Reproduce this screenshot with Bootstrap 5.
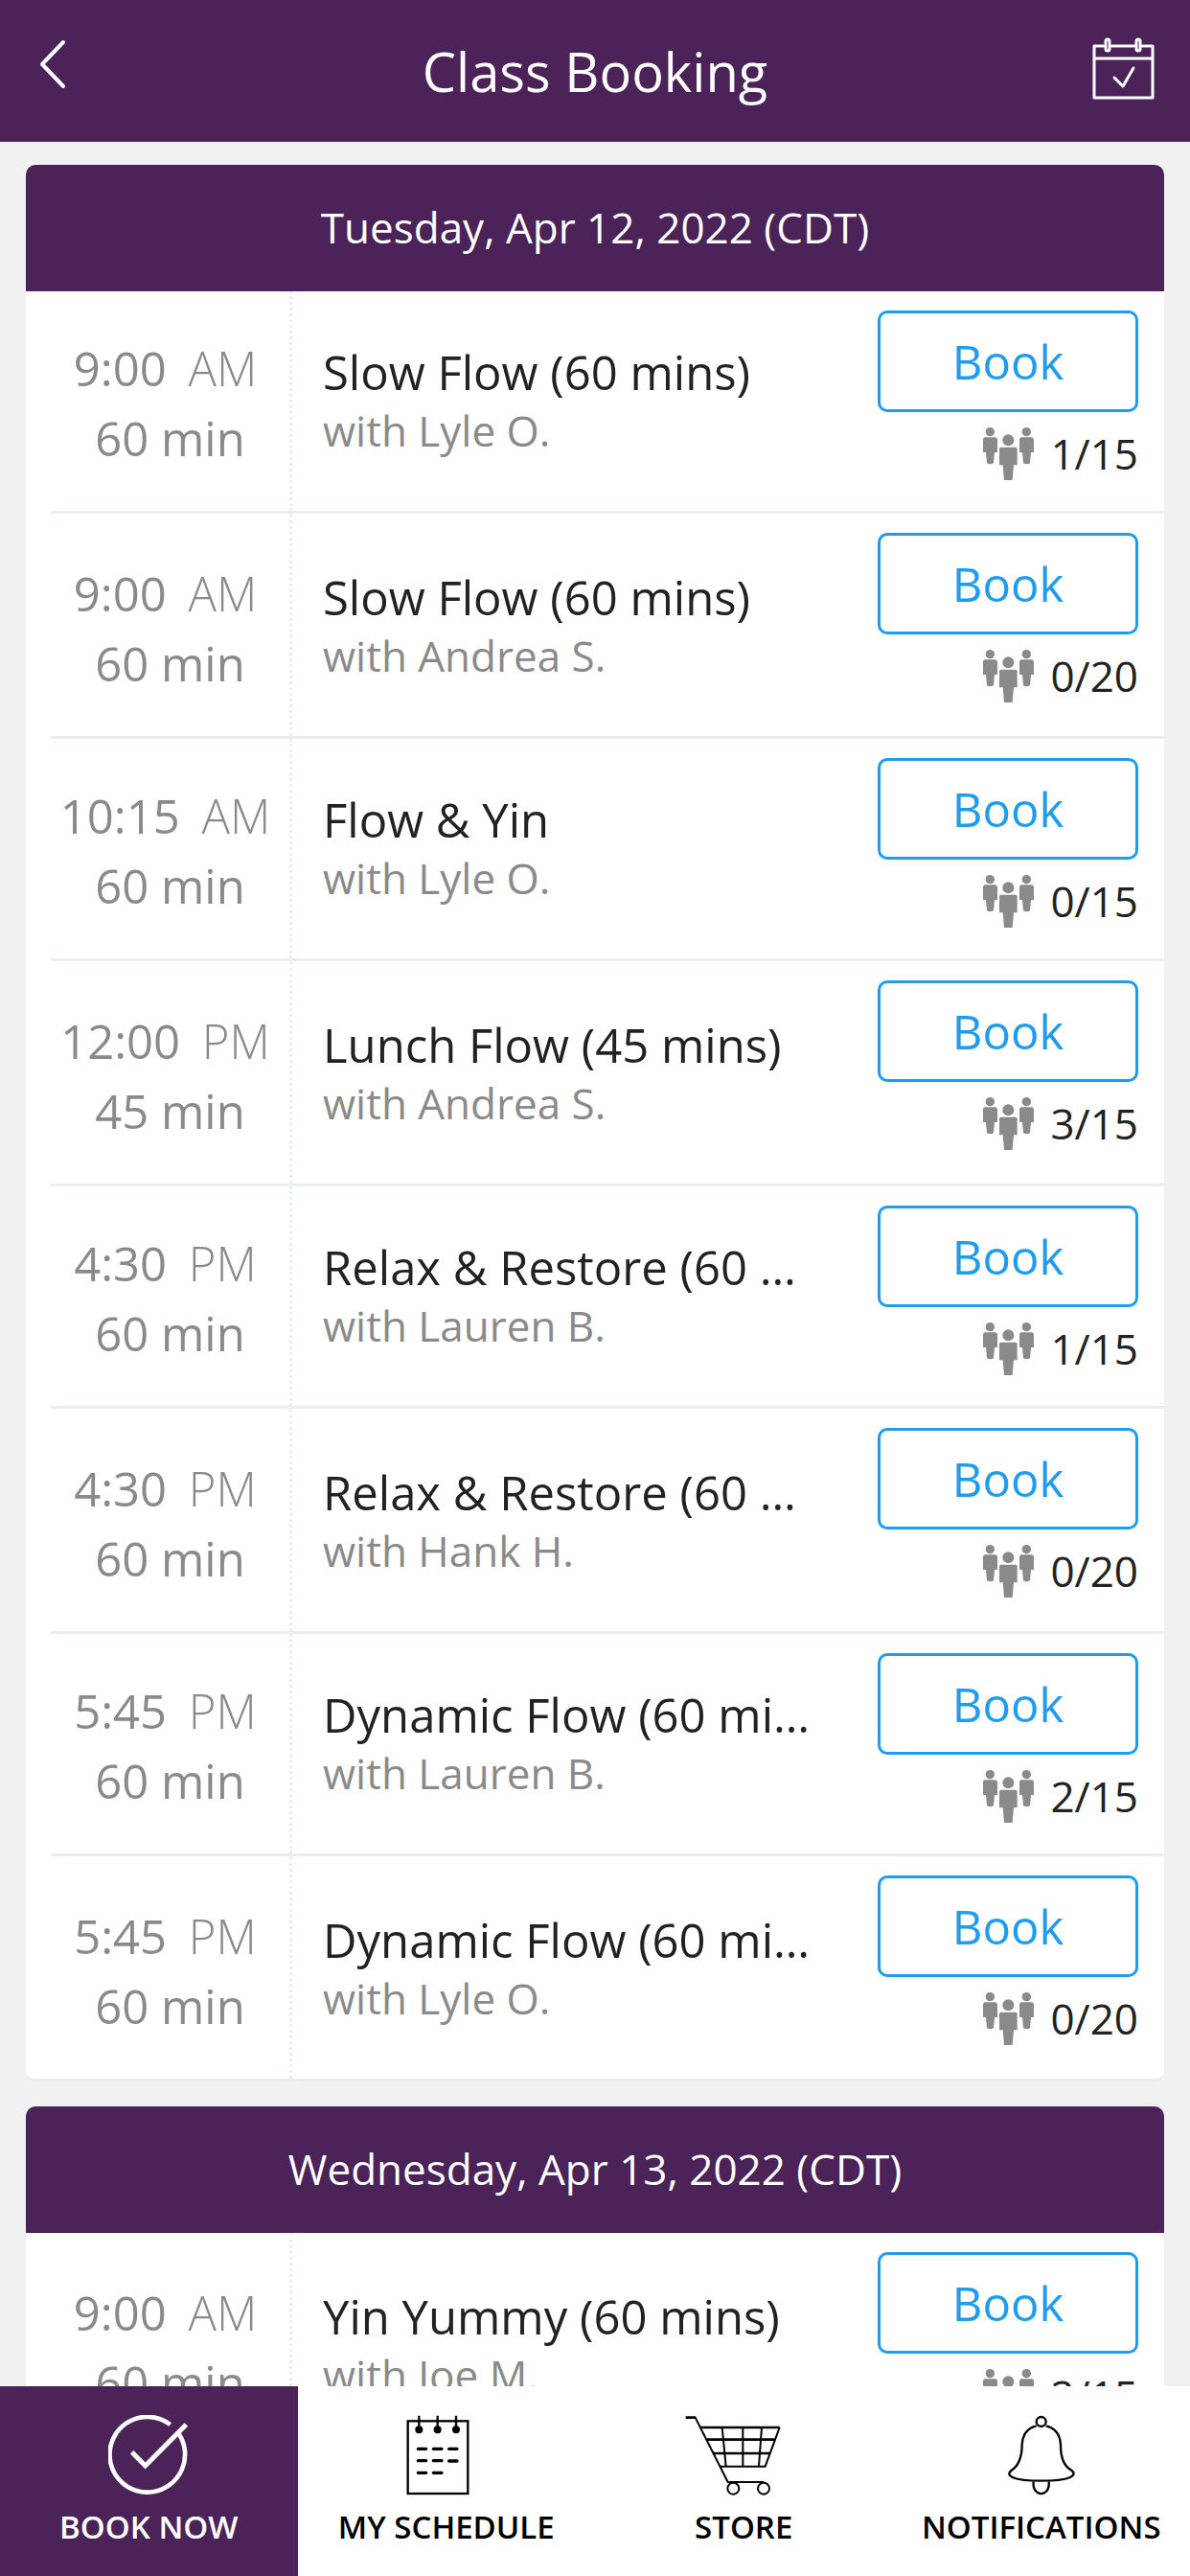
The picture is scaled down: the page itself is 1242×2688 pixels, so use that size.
<!DOCTYPE html>
<html lang="en">
<head>
<meta charset="utf-8">
<meta name="viewport" content="width=device-width, initial-scale=1">
<title>Class Booking</title>
<link href="https://cdn.jsdelivr.net/npm/bootstrap@5.3.0/dist/css/bootstrap.min.css" rel="stylesheet">
<style>
  :root { --brand: #4b2359; --action: #209cee; --rule: #e9efee; --muted: #8a8a8a; }
  body { font-family: "Open Sans", "Noto Sans", sans-serif; background: #f1f1f1; color: #222; }
  svg { display: block; flex: none; }

  .top-bar { background: var(--brand); height: 148px; padding: 0 36px; }
  .top-bar h1 { font-size: 56px; line-height: 76px; font-weight: 400; }
  .top-side { width: 70px; color: #fff; padding-bottom: 14px; }
  .top-side.end-side { padding-bottom: 4px; }

  .schedule { padding: 24px 27px; overflow-y: auto; scrollbar-width: none; min-height: 0; }
  .schedule::-webkit-scrollbar { display: none; }
  .day-card { border: 0; border-bottom: 3px solid var(--rule); border-radius: 10px; margin-bottom: 26px; overflow: hidden; background: #fff; }
  .day-head { background: var(--brand); color: #fff; font-size: 44px; line-height: 62px; font-weight: 400; padding: 34px 0 36px; border: 0; }
  .day-list { padding-left: 26px; }

  .slot { height: 232px; border-bottom: 3px solid var(--rule); }
  .slot:nth-child(even) { height: 235px; }
  .slot:last-child { border-bottom: 0; height: 232px; }
  .slot-time { width: 252px; border-right: 3px dotted var(--rule); color: var(--muted); font-size: 49px; line-height: 73px; padding-bottom: 39px; }
  .slot-time .clock { padding-right: 10px; }
  .slot-time .meridiem { font-weight: 300; margin-left: 10px; }
  .slot-info { padding: 0 60px 57px 32px; min-width: 0; }
  .slot-name { font-size: 49px; line-height: 68px; font-weight: 400; }
  .slot-coach { font-size: 44px; line-height: 54px; color: var(--muted); }
  .slot-action { width: 272px; margin-right: 27px; padding-top: 20px; }
  .btn-book { height: 106px; border: 3px solid var(--action); border-radius: 10px; background: #fff; color: var(--action); font-size: 49px; line-height: 66px; padding: 0; }
  .btn-book:hover { background: var(--action); color: #fff; }
  .slot-count { font-size: 44px; line-height: 60px; margin-top: 13px; gap: 17px; }

  .tab-bar { background: #fff; height: 198px; }
  .tab-item { flex: 1 1 0; min-width: 0; color: #000; text-decoration: none; font-size: 33px; line-height: 44px; font-weight: 600; padding-top: 30px; gap: 11px; white-space: nowrap; }
  .tab-item.active { background: var(--brand); color: #fff; }
</style>
</head>
<body>
<svg width="0" height="0" class="d-none" aria-hidden="true">
  <symbol id="people" viewBox="0 0 159 165">
    <g fill="#8a8a8a">
      <ellipse cx="22" cy="14" rx="14" ry="14"/><path d="M4 31H40L45 36V78H36L33 112Q22 118 12 112L9 78H0V36Z"/>
      <ellipse cx="136" cy="14" rx="14" ry="14"/><path d="M118 31H154L159 36V78H150L147 112Q136 118 126 112L123 78H114V36Z"/>
      <ellipse cx="79" cy="40" rx="18" ry="18"/><path d="M55 62H103L107 66V118H96L92 165H66L62 118H51V66Z"/>
    </g>
  </symbol>
</svg>
<div class="d-flex flex-column vh-100">
  <header class="top-bar d-flex flex-shrink-0 align-items-center justify-content-between">
    <a href="#" class="top-side" aria-label="Back">
      <svg width="38" height="54" viewBox="0 0 38 54" fill="none" stroke="currentColor" stroke-width="4" stroke-linecap="round" stroke-linejoin="round"><path d="M30 4 8 27 30 50"/></svg>
    </a>
    <h1 class="m-0 text-white">Class Booking</h1>
    <a href="#" class="top-side end-side d-flex justify-content-end" aria-label="My calendar">
      <svg width="68" height="66" viewBox="0 0 68 66" fill="none" stroke="currentColor" stroke-width="3" stroke-linecap="round" stroke-linejoin="round"><path d="M14 9H4V63H65V9H54M22 9H46M4 22H65M25 42 34 51 45 32"/><rect x="16" y="2" width="4" height="12" rx="2"/><rect x="48" y="2" width="4" height="12" rx="2"/></svg>
    </a>
  </header>

  <main class="schedule flex-grow-1">
    <section class="card day-card">
      <h2 class="card-header day-head text-center m-0 rounded-0">Tuesday, Apr 12, 2022 (CDT)</h2>
      <ul class="day-list list-unstyled m-0">
        <li class="slot d-flex align-items-end">
          <div class="slot-time text-center align-self-stretch flex-shrink-0 d-flex flex-column justify-content-end"><div class="clock">9:00 <span class="meridiem">AM</span></div><div>60 min</div></div>
          <div class="slot-info flex-grow-1"><h3 class="slot-name text-truncate m-0">Slow Flow (60 mins)</h3><div class="slot-coach">with Lyle O.</div></div>
          <div class="slot-action align-self-start flex-shrink-0"><button type="button" class="btn btn-book w-100">Book</button><div class="slot-count d-flex align-items-center justify-content-end"><svg width="53" height="55"><use href="#people"/></svg><span>1/15</span></div></div>
        </li>
        <li class="slot d-flex align-items-end">
          <div class="slot-time text-center align-self-stretch flex-shrink-0 d-flex flex-column justify-content-end"><div class="clock">9:00 <span class="meridiem">AM</span></div><div>60 min</div></div>
          <div class="slot-info flex-grow-1"><h3 class="slot-name text-truncate m-0">Slow Flow (60 mins)</h3><div class="slot-coach">with Andrea S.</div></div>
          <div class="slot-action align-self-start flex-shrink-0"><button type="button" class="btn btn-book w-100">Book</button><div class="slot-count d-flex align-items-center justify-content-end"><svg width="53" height="55"><use href="#people"/></svg><span>0/20</span></div></div>
        </li>
        <li class="slot d-flex align-items-end">
          <div class="slot-time text-center align-self-stretch flex-shrink-0 d-flex flex-column justify-content-end"><div class="clock">10:15 <span class="meridiem">AM</span></div><div>60 min</div></div>
          <div class="slot-info flex-grow-1"><h3 class="slot-name text-truncate m-0">Flow &amp; Yin</h3><div class="slot-coach">with Lyle O.</div></div>
          <div class="slot-action align-self-start flex-shrink-0"><button type="button" class="btn btn-book w-100">Book</button><div class="slot-count d-flex align-items-center justify-content-end"><svg width="53" height="55"><use href="#people"/></svg><span>0/15</span></div></div>
        </li>
        <li class="slot d-flex align-items-end">
          <div class="slot-time text-center align-self-stretch flex-shrink-0 d-flex flex-column justify-content-end"><div class="clock">12:00 <span class="meridiem">PM</span></div><div>45 min</div></div>
          <div class="slot-info flex-grow-1"><h3 class="slot-name text-truncate m-0">Lunch Flow (45 mins)</h3><div class="slot-coach">with Andrea S.</div></div>
          <div class="slot-action align-self-start flex-shrink-0"><button type="button" class="btn btn-book w-100">Book</button><div class="slot-count d-flex align-items-center justify-content-end"><svg width="53" height="55"><use href="#people"/></svg><span>3/15</span></div></div>
        </li>
        <li class="slot d-flex align-items-end">
          <div class="slot-time text-center align-self-stretch flex-shrink-0 d-flex flex-column justify-content-end"><div class="clock">4:30 <span class="meridiem">PM</span></div><div>60 min</div></div>
          <div class="slot-info flex-grow-1"><h3 class="slot-name text-truncate m-0">Relax &amp; Restore (60 mins)</h3><div class="slot-coach">with Lauren B.</div></div>
          <div class="slot-action align-self-start flex-shrink-0"><button type="button" class="btn btn-book w-100">Book</button><div class="slot-count d-flex align-items-center justify-content-end"><svg width="53" height="55"><use href="#people"/></svg><span>1/15</span></div></div>
        </li>
        <li class="slot d-flex align-items-end">
          <div class="slot-time text-center align-self-stretch flex-shrink-0 d-flex flex-column justify-content-end"><div class="clock">4:30 <span class="meridiem">PM</span></div><div>60 min</div></div>
          <div class="slot-info flex-grow-1"><h3 class="slot-name text-truncate m-0">Relax &amp; Restore (60 mins)</h3><div class="slot-coach">with Hank H.</div></div>
          <div class="slot-action align-self-start flex-shrink-0"><button type="button" class="btn btn-book w-100">Book</button><div class="slot-count d-flex align-items-center justify-content-end"><svg width="53" height="55"><use href="#people"/></svg><span>0/20</span></div></div>
        </li>
        <li class="slot d-flex align-items-end">
          <div class="slot-time text-center align-self-stretch flex-shrink-0 d-flex flex-column justify-content-end"><div class="clock">5:45 <span class="meridiem">PM</span></div><div>60 min</div></div>
          <div class="slot-info flex-grow-1"><h3 class="slot-name text-truncate m-0">Dynamic Flow (60 mins)</h3><div class="slot-coach">with Lauren B.</div></div>
          <div class="slot-action align-self-start flex-shrink-0"><button type="button" class="btn btn-book w-100">Book</button><div class="slot-count d-flex align-items-center justify-content-end"><svg width="53" height="55"><use href="#people"/></svg><span>2/15</span></div></div>
        </li>
        <li class="slot d-flex align-items-end">
          <div class="slot-time text-center align-self-stretch flex-shrink-0 d-flex flex-column justify-content-end"><div class="clock">5:45 <span class="meridiem">PM</span></div><div>60 min</div></div>
          <div class="slot-info flex-grow-1"><h3 class="slot-name text-truncate m-0">Dynamic Flow (60 mins)</h3><div class="slot-coach">with Lyle O.</div></div>
          <div class="slot-action align-self-start flex-shrink-0"><button type="button" class="btn btn-book w-100">Book</button><div class="slot-count d-flex align-items-center justify-content-end"><svg width="53" height="55"><use href="#people"/></svg><span>0/20</span></div></div>
        </li>
      </ul>
    </section>

    <section class="card day-card">
      <h2 class="card-header day-head text-center m-0 rounded-0">Wednesday, Apr 13, 2022 (CDT)</h2>
      <ul class="day-list list-unstyled m-0">
        <li class="slot d-flex align-items-end">
          <div class="slot-time text-center align-self-stretch flex-shrink-0 d-flex flex-column justify-content-end"><div class="clock">9:00 <span class="meridiem">AM</span></div><div>60 min</div></div>
          <div class="slot-info flex-grow-1"><h3 class="slot-name text-truncate m-0">Yin Yummy (60 mins)</h3><div class="slot-coach">with Joe M.</div></div>
          <div class="slot-action align-self-start flex-shrink-0"><button type="button" class="btn btn-book w-100">Book</button><div class="slot-count d-flex align-items-center justify-content-end"><svg width="53" height="55"><use href="#people"/></svg><span>2/15</span></div></div>
        </li>
      </ul>
    </section>
  </main>

  <nav class="tab-bar d-flex flex-shrink-0" aria-label="Main">
    <a href="#" class="tab-item active d-flex flex-column align-items-center" aria-current="page">
      <svg width="84" height="84" viewBox="72 58 252 252" fill="none" stroke="currentColor" stroke-width="14"><path d="M266 88A118 118 0 1 0 293 117"/><path d="M146 174 188 217 316 88" stroke-width="15"/></svg>
      <span>BOOK NOW</span>
    </a>
    <a href="#" class="tab-item d-flex flex-column align-items-center">
      <svg width="86" height="84" viewBox="70 58 258 252" fill="none" stroke="currentColor" stroke-width="7"><rect x="78" y="77" width="188" height="227"/><path d="M113 60v44M171 60v44M229 60v44"/><g fill="currentColor" stroke="none"><circle cx="113" cy="104" r="12"/><circle cx="171" cy="104" r="12"/><circle cx="229" cy="104" r="12"/></g><path d="M110 164h25M158 164h26M207 164h25M110 201h25M158 201h26M207 202h25M110 239h25M158 239h26" stroke-width="10" stroke-linecap="round"/></svg>
      <span>MY SCHEDULE</span>
    </a>
    <a href="#" class="tab-item d-flex flex-column align-items-center">
      <svg width="122" height="84" viewBox="44 58 366 252" fill="none" stroke="currentColor" stroke-width="5"><path d="M46 66H78M92 97H340M112 135H325M132 178H310" stroke-width="8"/><path d="M154 219H297M76 66 178 268H290M160 97 172 219M225 97V219M284 97 275 219M340 97 295 219" stroke-width="6"/><circle cx="195" cy="288" r="18" stroke-width="6"/><circle cx="290" cy="288" r="18" stroke-width="6"/></svg>
      <span>STORE</span>
    </a>
    <a href="#" class="tab-item d-flex flex-column align-items-center">
      <svg width="70" height="84" viewBox="66 58 210 252" fill="none" stroke="currentColor" stroke-width="7"><circle cx="170" cy="79" r="15"/><path d="M155 92C128 98 111 120 110 150C110 195 98 218 76 232C58 247 78 264 170 264C262 264 284 247 266 232C242 218 231 195 231 150C230 120 213 98 185 92"/><path d="M146 266C140 317 200 317 194 266"/></svg>
      <span>NOTIFICATIONS</span>
    </a>
  </nav>
</div>
<script src="https://cdn.jsdelivr.net/npm/bootstrap@5.3.0/dist/js/bootstrap.bundle.min.js"></script>
</body>
</html>
